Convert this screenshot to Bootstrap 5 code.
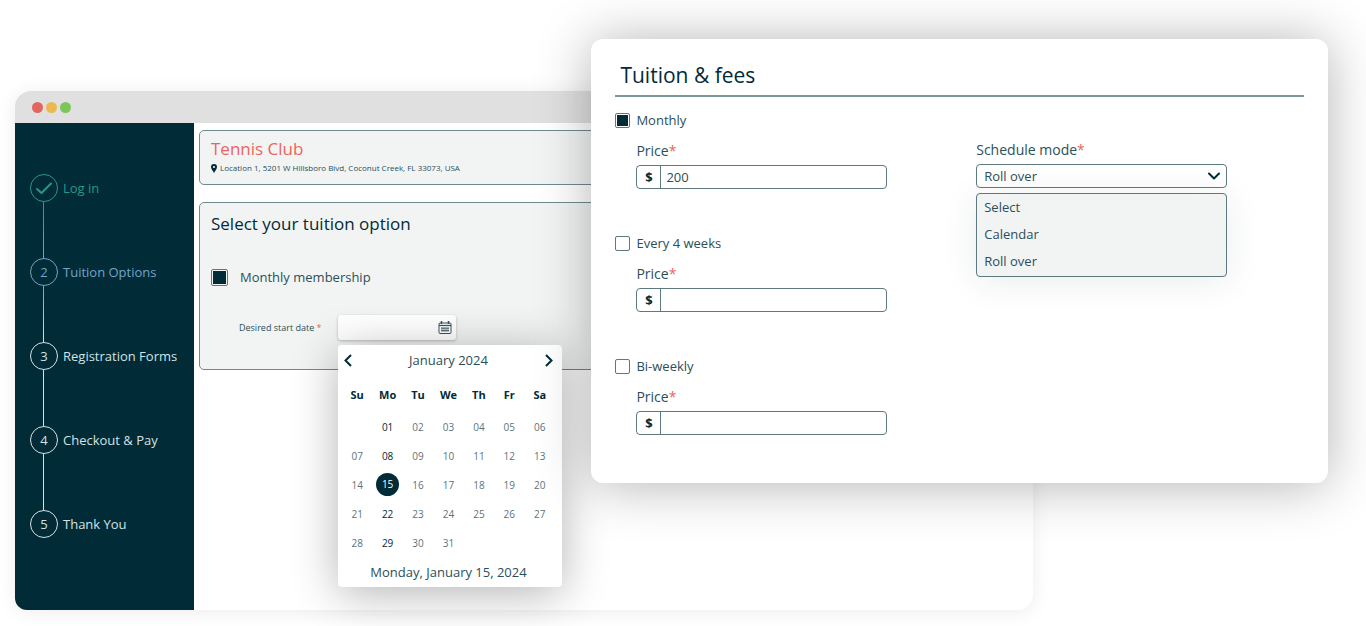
<!DOCTYPE html>
<html lang="en">
<head>
<meta charset="utf-8">
<meta name="viewport" content="width=device-width, initial-scale=1">
<title>Tennis Club – Tuition</title>
<link href="https://cdn.jsdelivr.net/npm/bootstrap@5.3.0/dist/css/bootstrap.min.css" rel="stylesheet">
<style>
  :root { --ink:#012b37; --ink-soft:#2b4f59; --line:#6f8a8f; --panel:#f2f4f4; --coral:#ec645f; }
  body { font-family:"Open Sans",sans-serif; color:var(--ink-soft); background:#fff; font-size:13px; line-height:20px; }
  .stage { padding:39px 38px 16px 15px; grid-template-columns:100%; }
  .stage > * { grid-area:1/1; }
  .req { color:var(--coral); }

  .app-window { width:77.5%; margin-top:52px; border-radius:16px; background:#fff; box-shadow:0 2px 20px rgba(0,0,0,.08); }
  .title-bar { height:32px; padding-left:17px; gap:3px; background:#e0e0e0; border-radius:16px 16px 0 0; }
  .dot { width:11px; height:11px; border-radius:50%; }
  .dot-red { background:#e3655f; }
  .dot-amber { background:#edb84c; }
  .dot-green { background:#79c857; }

  .side { width:179px; min-height:487px; padding:51px 0 0 15px; background:var(--ink); border-radius:0 0 0 12px; }
  .step { height:84px; gap:5px; color:#d3e2e4; text-decoration:none; position:relative; line-height:28px; }
  .step.done { color:#27998a; }
  .step.current { color:#71a5c7; }
  .step-mark { width:28px; height:28px; border:1px solid currentColor; border-radius:50%; }
  .step:not(.last)::after { content:""; position:absolute; left:13px; top:28px; bottom:0; width:1px; background:#d3e2e4; }
  .step.done::after { background:linear-gradient(#27998a,#71a5c7); }
  .step.current::after { background:linear-gradient(#71a5c7,#d3e2e4); }

  .content { padding:7px 6px 0 5px; }
  .panel { background:var(--panel); border:1px solid var(--line); border-radius:5px; padding:0 11px; }
  .club { height:55px; padding-top:7px; }
  .club h1 { font-size:17px; line-height:22px; color:var(--coral); margin:0; font-weight:400; }
  .club address { font-size:8px; line-height:16px; margin:0; gap:3px; }
  .option { height:168px; padding-top:9px; margin-top:17px; }
  .option h2 { font-size:17px; line-height:24px; margin:0 0 31px; color:var(--ink); font-weight:400; }
  .tick { -webkit-appearance:none; appearance:none; width:15px; height:15px; margin:0; border:1px solid #5d787e; border-radius:2px; background:#fff; padding:1px; flex:none; }
  .tick:checked { background:var(--ink) content-box; }
  .tick.big { width:17px; height:17px; }
  .date-row { margin:28px 0 0 28px; }
  .date-row label { font-size:9px; width:99px; }
  .date-box { width:118px; height:25px; background:#fff; border-radius:3px; box-shadow:0 1px 3px rgba(0,0,0,.25); position:relative; }
  .date-box input { width:90px; min-width:0; border:0; background:none; outline:0; font-size:10px; }
  .plain { border:0; padding:0; background:none; color:var(--ink); line-height:0; }

  .calendar { position:absolute; top:30px; left:0; width:224px; background:#fff; border-radius:4px; z-index:1; padding:5px 7px 4px 4px; box-shadow:0 6px 46px rgba(0,0,0,.3); }
  .cal-head { height:20px; padding:0 2px; font-size:13px; }
  .cal-days { width:100%; table-layout:fixed; margin-top:8px; text-align:center; font-size:10px; color:#5b747b; }
  .cal-days th { height:34px; font-size:11px; color:var(--ink); padding:0; text-align:center; }
  .cal-days td { height:29px; padding:0; }
  .cal-days td:nth-child(2) { color:var(--ink); font-weight:500; }
  .cal-days td .chosen { display:block; width:23px; height:23px; line-height:23px; margin:auto; border-radius:50%; background:var(--ink); color:#fff; font-weight:400; }
  .cal-foot { padding-top:4px; line-height:22px; text-align:center; font-size:13px; }

  .fees { width:56.1%; height:444px; padding:24px 24px 0; border-radius:12px; background:#fff; box-shadow:0 2px 54px rgba(0,0,0,.3); z-index:2; }
  .fees h2 { font-size:21px; line-height:24px; margin:0; padding:0 0 8px 5px; color:var(--ink); border-bottom:2px solid #7d979f; font-weight:400; }
  .plans { width:52.4%; padding-top:12px; }
  .plan { height:123px; }
  .plan-name { height:22px; gap:6px; }
  .field { width:251px; }
  .plan .field { margin:10px 0 0 21px; }
  .field > label { display:block; font-size:14px; line-height:20px; margin-bottom:4px; }
  .money, .mode { height:24px; border:1px solid #5d787e; border-radius:4px; }
  .money span { width:24px; border-right:1px solid #5d787e; color:var(--ink); }
  .money input { border:0; background:none; outline:0; padding:0 5px; min-width:0; font-size:13px; color:inherit; }
  .schedule { padding-top:43px; }
  .mode { -webkit-appearance:none; appearance:none; width:100%; padding:0 7px; font-size:13px; color:inherit; background:none; display:block; }
  .mode-wrap { position:relative; }
  .mode-wrap svg { position:absolute; right:7px; top:8px; pointer-events:none; }
  .mode-list { margin:5px 0 0; height:84px; border:1px solid #5d787e; border-radius:4px; background:var(--panel); box-shadow:0 4px 36px rgba(0,40,55,.09); }
  .mode-list button { display:block; width:100%; height:27px; border:0; background:none; text-align:left; padding:0 7px 2px; font-size:13px; color:inherit; }
</style>
</head>
<body>
<main class="stage d-grid">
  <section class="app-window" aria-label="Registration">
    <div class="title-bar d-flex align-items-center">
      <span class="dot dot-red"></span><span class="dot dot-amber"></span><span class="dot dot-green"></span>
    </div>
    <div class="d-flex">
      <nav class="side flex-shrink-0" aria-label="Steps">
        <a href="#" class="step done d-flex"><span class="step-mark d-flex align-items-center justify-content-center"><svg width="18" height="16" viewBox="0 0 18 16" fill="none" stroke="currentColor" stroke-width="2" stroke-linecap="round" stroke-linejoin="round"><path d="M2 9l4.500 4L16 3.500"/></svg></span>Log in</a>
        <a href="#" class="step current d-flex"><span class="step-mark d-flex align-items-center justify-content-center">2</span>Tuition Options</a>
        <a href="#" class="step d-flex"><span class="step-mark d-flex align-items-center justify-content-center">3</span>Registration Forms</a>
        <a href="#" class="step d-flex"><span class="step-mark d-flex align-items-center justify-content-center">4</span>Checkout &amp; Pay</a>
        <a href="#" class="step last d-flex"><span class="step-mark d-flex align-items-center justify-content-center">5</span>Thank You</a>
      </nav>
      <div class="content flex-grow-1">
        <div class="panel club">
          <h1>Tennis Club</h1>
          <address class="d-flex align-items-center"><svg width="6" height="9" viewBox="0 0 6 9"><path fill="#012b37" fill-rule="evenodd" d="M3 0a3 3 0 0 0-3 3c0 2 2 4 3 6 1-2 3-4 3-6a3 3 0 0 0-3-3zm0 1.900a1.100 1.100 0 1 1 0 2.200 1.100 1.100 0 0 1 0-2.200z"/></svg>Location 1, 5201 W Hillsboro Bivd, Coconut Creek, FL 33073, USA</address>
        </div>
        <div class="panel option">
          <h2>Select your tuition option</h2>
          <div class="d-flex align-items-center"><input class="tick big" type="checkbox" id="member" checked><label class="ps-2 ms-1" for="member">Monthly membership</label></div>
          <div class="date-row d-flex align-items-center">
            <label for="start">Desired start date <span class="req">*</span></label>
            <div class="date-box d-flex align-items-center">
              <input type="text" id="start">
              <button class="plain ms-auto me-1" type="button" aria-label="Open calendar"><svg width="14" height="14" viewBox="0 0 14 14" fill="none" stroke="#35545d"><rect x="1" y="2" width="12" height="10.500" rx="1"/><path d="M1 4.500h12" stroke-width="1.200"/><path d="M3.500 0v3M10.500 0v3" stroke-width="1.500"/><path d="M4 6v5M6 6v5M8 6v5M10 6v5M3 7.300h8M3 9.500h8" stroke-width=".7"/></svg></button>
              <div class="calendar">
                <div class="cal-head d-flex justify-content-between align-items-center">
                  <button class="plain" type="button" aria-label="Previous month"><svg width="8" height="13" viewBox="0 0 8 13" fill="none" stroke="currentColor" stroke-width="2"><path d="M7 1L1.500 6.500 7 12"/></svg></button>
                  <span>January 2024</span>
                  <button class="plain" type="button" aria-label="Next month"><svg width="8" height="13" viewBox="0 0 8 13" fill="none" stroke="currentColor" stroke-width="2"><path d="M1 1l5.500 5.500L1 12"/></svg></button>
                </div>
                <table class="cal-days">
                  <thead><tr><th>Su</th><th>Mo</th><th>Tu</th><th>We</th><th>Th</th><th>Fr</th><th>Sa</th></tr></thead>
                  <tbody>
                    <tr><td></td><td>01</td><td>02</td><td>03</td><td>04</td><td>05</td><td>06</td></tr>
                    <tr><td>07</td><td>08</td><td>09</td><td>10</td><td>11</td><td>12</td><td>13</td></tr>
                    <tr><td>14</td><td><span class="chosen">15</span></td><td>16</td><td>17</td><td>18</td><td>19</td><td>20</td></tr>
                    <tr><td>21</td><td>22</td><td>23</td><td>24</td><td>25</td><td>26</td><td>27</td></tr>
                    <tr><td>28</td><td>29</td><td>30</td><td>31</td><td></td><td></td><td></td></tr>
                  </tbody>
                </table>
                <div class="cal-foot">Monday, January 15, 2024</div>
              </div>
            </div>
          </div>
        </div>
      </div>
    </div>
  </section>

  <section class="fees ms-auto" aria-label="Tuition and fees">
    <h2>Tuition &amp; fees</h2>
    <div class="d-flex">
      <div class="plans">
        <div class="plan">
          <div class="plan-name d-flex align-items-center"><input class="tick" type="checkbox" id="p1" checked><label for="p1">Monthly</label></div>
          <div class="field"><label for="a1">Price<span class="req">*</span></label>
            <div class="money d-flex"><span class="d-flex align-items-center justify-content-center flex-shrink-0"><b>$</b></span><input class="flex-grow-1" id="a1" type="text" value="200"></div></div>
        </div>
        <div class="plan">
          <div class="plan-name d-flex align-items-center"><input class="tick" type="checkbox" id="p2"><label for="p2">Every 4 weeks</label></div>
          <div class="field"><label for="a2">Price<span class="req">*</span></label>
            <div class="money d-flex"><span class="d-flex align-items-center justify-content-center flex-shrink-0"><b>$</b></span><input class="flex-grow-1" id="a2" type="text"></div></div>
        </div>
        <div class="plan">
          <div class="plan-name d-flex align-items-center"><input class="tick" type="checkbox" id="p3"><label for="p3">Bi-weekly</label></div>
          <div class="field"><label for="a3">Price<span class="req">*</span></label>
            <div class="money d-flex"><span class="d-flex align-items-center justify-content-center flex-shrink-0"><b>$</b></span><input class="flex-grow-1" id="a3" type="text"></div></div>
        </div>
      </div>
      <div class="schedule">
        <div class="field"><label for="mode">Schedule mode<span class="req">*</span></label>
          <div class="mode-wrap">
            <select class="mode" id="mode"><option>Roll over</option><option>Select</option><option>Calendar</option></select>
            <svg width="12" height="8" viewBox="0 0 12 8" fill="none" stroke="#012b37" stroke-width="2" stroke-linecap="round" stroke-linejoin="round"><path d="M1 1.500l5 5 5-5"/></svg>
          </div>
          <div class="mode-list"><button type="button">Select</button><button type="button">Calendar</button><button type="button">Roll over</button></div>
        </div>
      </div>
    </div>
  </section>
</main>
<script src="https://cdn.jsdelivr.net/npm/bootstrap@5.3.0/dist/js/bootstrap.bundle.min.js"></script>
</body>
</html>
